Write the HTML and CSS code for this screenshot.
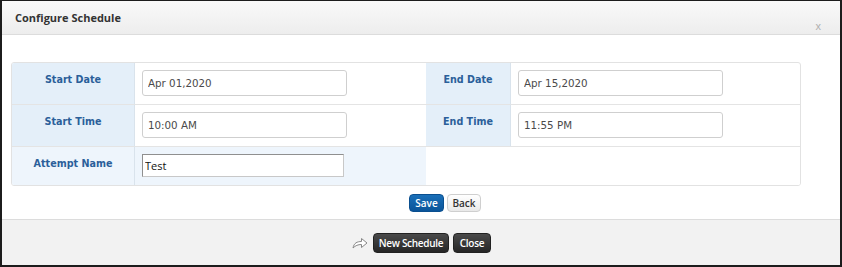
FILE: index.html
```html
<!DOCTYPE html>
<html lang="en">

<head>
    <meta charset="UTF-8">
    <title>Configure Schedule</title>
    <link rel="stylesheet" href="styles.css">
</head>

<body>
    <div class="dialog">
        <div class="dialog-header">
            <span class="dialog-title">Configure Schedule</span>
            <span class="dialog-close">x</span>
        </div>

        <div class="dialog-body">
            <div class="schedule">
                <div class="cell label">Start Date</div>
                <div class="cell field"><input class="txt" type="text" value="Apr 01,2020"></div>
                <div class="cell label">End Date</div>
                <div class="cell field"><input class="txt" type="text" value="Apr 15,2020"></div>

                <div class="cell label">Start Time</div>
                <div class="cell field"><input class="txt" type="text" value="10:00 AM"></div>
                <div class="cell label">End Time</div>
                <div class="cell field"><input class="txt" type="text" value="11:55 PM"></div>

                <div class="cell label light last">Attempt Name</div>
                <div class="cell field light last"><input class="plain" type="text" value="Test"></div>
                <div class="cell blank last"></div>
            </div>

            <div class="actions">
                <button class="btn btn-blue">Save</button>
                <button class="btn btn-grey">Back</button>
            </div>
        </div>

        <div class="dialog-footer">
            <svg class="share" width="16" height="12" viewBox="0 0 16 12">
                <path d="M1 11 C2 6 5 4.5 9.5 4.5 L9.5 1.5 L15 6 L9.5 10.5 L9.5 7.5 C6 7.5 3.5 8.5 1 11 Z" fill="#fff" stroke="#888" stroke-width="1" stroke-linejoin="round"/>
            </svg>
            <button class="btn btn-dark">New Schedule</button>
            <button class="btn btn-dark btn-close">Close</button>
        </div>
    </div>
</body>

</html>
```

FILE: styles.css
```css
html, body {
  margin: 0;
  padding: 0;
  background: #1a1a1a;
}

.dialog {
  width: 842px;
  height: 267px;
  box-sizing: border-box;
  border: 2px solid #1c1c1c;
  border-top-width: 1px;
  background: #fff;
  display: flex;
  flex-direction: column;
  font-family: "DejaVu Sans", Verdana, sans-serif;
}

.dialog-header {
  height: 33px;
  display: flex;
  align-items: center;
  justify-content: space-between;
  padding: 0 19px 0 13px;
  background: linear-gradient(#f9f9f9, #ededed);
  border-bottom: 1px solid #dcdcdc;
}

.dialog-title {
  font-family: "Open Sans", sans-serif;
  font-weight: bold;
  font-size: 11px;
  color: #333;
  margin-top: -1px;
}

.dialog-close {
  font-family: "Liberation Sans", sans-serif;
  font-size: 11px;
  color: #b0b0b0;
  margin-top: 17px;
}

.dialog-body {
  flex: 1;
  padding: 27px 39px 0 9px;
}

.schedule {
  display: grid;
  grid-template-columns: 123px 291px 85px 291px;
  grid-template-rows: 42px 42px 38px;
  border: 1px solid #e2e2e2;
  border-radius: 3px;
  overflow: hidden;
}

.cell {
  border-bottom: 1px solid #e4e4e4;
  box-sizing: border-box;
}

.cell.last {
  border-bottom: none;
}

.label {
  background: #e4eff9;
  border-right: 1px solid #d9e3ec;
  text-align: center;
  font-weight: bold;
  font-size: 9.6px;
  color: #2b5f9a;
  padding-top: 11px;
}

.label.light,
.field.light {
  background: #eef5fc;
}

.field {
  padding: 7px 0 0 7px;
}

.blank {
  grid-column: span 2;
  background: #fff;
}

.txt {
  width: 205px;
  height: 26px;
  box-sizing: border-box;
  border: 1px solid #cfcfcf;
  border-radius: 3px;
  padding: 0 5px;
  font-family: "DejaVu Sans", Verdana, sans-serif;
  font-size: 10.3px;
  color: #4a4a4a;
  background: #fff;
}

.plain {
  width: 202px;
  height: 23px;
  box-sizing: border-box;
  border: 1px solid #8f8f8f;
  border-right-color: #c8c8c8;
  border-bottom-color: #c8c8c8;
  padding: 0 2px;
  font-family: "Open Sans", sans-serif;
  font-size: 11px;
  color: #111;
  background: #fff;
}

.actions {
  display: flex;
  justify-content: center;
  gap: 3px;
  margin-top: 8px;
  padding-left: 78px;
}

.btn {
  font-family: "Open Sans", sans-serif;
  font-weight: 600;
  font-size: 10px;
  border-radius: 4px;
  padding: 0 6px;
  cursor: pointer;
}

.btn-blue {
  height: 18px;
  width: 35px;
  padding: 0;
  color: #fff;
  border: 1px solid #0a4f8f;
  background: linear-gradient(#1a6fb8, #0a5499);
}

.btn-grey {
  height: 18px;
  width: 34px;
  padding: 0;
  color: #333;
  border: 1px solid #cfcfcf;
  background: linear-gradient(#fff, #e9e9e9);
}

.dialog-footer {
  height: 45px;
  border-top: 1px solid #dcdcdc;
  background: #f2f2f2;
  display: flex;
  align-items: center;
  justify-content: center;
  gap: 4px;
  padding-left: 1px;
}

.share {
  margin-right: 1px;
}

.btn-dark {
  height: 20px;
  width: 76px;
  padding: 0;
  color: #fff;
  border: 1px solid #222;
  background: linear-gradient(#4a4a4a, #262626);
  letter-spacing: -0.3px;
}

.btn-close {
  width: 38px;
}
```
